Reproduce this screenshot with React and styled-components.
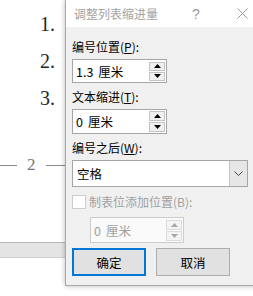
import React from "react";
import styled, { createGlobalStyle } from "styled-components";

const Global = createGlobalStyle`
  html, body { margin: 0; padding: 0; background: #fff; }
  body { width: 253px; height: 296px; overflow: hidden; }
`;

const Screen = styled.div`
  position: relative;
  width: 253px;
  height: 296px;
  overflow: hidden;
  background: #fff;
`;

const Doc = styled.div`
  display: flex;
  flex-direction: column;
  padding-top: 6px;
`;

const NumList = styled.div`
  width: 55px;
  display: flex;
  flex-direction: column;
  align-items: flex-end;
`;

const Num = styled.div`
  font-family: "Liberation Serif", "DejaVu Serif", serif;
  font-size: 20px;
  line-height: 37px;
  height: 37px;
  color: #262626;
`;

const PageMark = styled.div`
  margin-top: 38px;
  height: 20px;
  display: flex;
  align-items: center;
  gap: 10px;
`;

const Rule = styled.div`
  width: ${(p) => p.$w}px;
  height: 1px;
  background: #8a8a8a;
`;

const PageNum = styled.span`
  font-family: "Liberation Serif", "DejaVu Serif", serif;
  font-size: 17px;
  line-height: 20px;
  color: #777;
`;

const PageGap = styled.div`
  margin-top: 67px;
  height: 14px;
  background: #e4e4e4;
  border-top: 1px solid #b8b8b8;
  border-bottom: 1px solid #d0d0d0;
`;

const Dialog = styled.div`
  position: absolute;
  left: 65px;
  top: 0;
  width: 200px;
  height: 285px;
  background: #f0f0f0;
  border: 1px solid #a8a8a8;
  border-top: none;
  box-shadow: 0 0 5px rgba(0, 0, 0, 0.28);
  display: flex;
  flex-direction: column;
  font-family: "Noto Sans CJK SC", "Noto Sans", sans-serif;
  font-size: 12px;
  color: #000;
`;

const TitleBar = styled.div`
  height: 27px;
  background: #fff;
  display: flex;
  align-items: center;
  padding-left: 8px;
`;

const Title = styled.span`
  color: #a3a3a3;
  font-size: 12px;
  line-height: 16px;
  flex: 1;
`;

const Help = styled.span`
  width: 10px;
  color: #9a9a9a;
  font-family: "Liberation Sans", sans-serif;
  font-size: 14px;
  margin-right: 36px;
  text-align: center;
`;

const CloseIcon = styled.svg`
  width: 11px;
  height: 11px;
  margin-right: 18px;
`;

const Body = styled.div`
  display: flex;
  flex-direction: column;
  padding: 12px 0 0 6px;
`;

const Label = styled.div`
  height: 16px;
  line-height: 16px;
  color: ${(p) => (p.$disabled ? "#a0a0a0" : "#000")};
  margin-top: ${(p) => p.$mt || 0}px;
  white-space: nowrap;
`;

const Key = styled.span`
  text-decoration: underline;
  text-underline-offset: 1px;
`;

const SpinBox = styled.div`
  margin-top: ${(p) => p.$mt || 4}px;
  margin-left: ${(p) => p.$ml || 0}px;
  width: ${(p) => p.$w}px;
  height: ${(p) => p.$h}px;
  box-sizing: border-box;
  border: 1px solid ${(p) => (p.$disabled ? "#cccccc" : "#a6a6a6")};
  background: ${(p) => (p.$disabled ? "#fafafa" : "#fff")};
  display: flex;
  align-items: center;
  padding: 0 1px 0 3px;
`;

const Value = styled.span`
  flex: 1;
  display: flex;
  gap: 5px;
  font-size: 12.5px;
  color: ${(p) => (p.$disabled ? "#a0a0a0" : "#000")};
  white-space: nowrap;
`;

const Spinner = styled.div`
  display: flex;
  flex-direction: column;
  gap: 1px;
  width: 16px;
`;

const SpinBtn = styled.div`
  height: ${(p) => p.$h}px;
  box-sizing: border-box;
  border: 1px solid ${(p) => (p.$disabled ? "#dcdcdc" : "#c4c4c4")};
  background: ${(p) => (p.$disabled ? "#f4f4f4" : "#f0f0f0")};
  display: flex;
  align-items: center;
  justify-content: center;
`;

const Select = styled.div`
  margin-top: 4px;
  width: 176px;
  height: 27px;
  box-sizing: border-box;
  border: 1px solid #a6a6a6;
  background: #fff;
  display: flex;
  align-items: stretch;
`;

const SelectText = styled.span`
  flex: 1;
  padding-left: 4px;
  font-size: 12.5px;
  line-height: 25px;
`;

const DropBtn = styled.div`
  width: 17px;
  background: #e6e6e6;
  border-left: 1px solid #c4c4c4;
  display: flex;
  align-items: center;
  justify-content: center;
`;

const CheckRow = styled.div`
  margin-top: 7px;
  height: 16px;
  display: flex;
  align-items: center;
  gap: 3px;
`;

const Box = styled.div`
  width: 12px;
  height: 12px;
  border: 1px solid #cccccc;
  background: #fff;
`;

const Buttons = styled.div`
  margin-top: 5px;
  display: flex;
  gap: 10px;
`;

const Button = styled.div`
  width: 74px;
  height: 28px;
  box-sizing: border-box;
  background: #e1e1e1;
  border: ${(p) => (p.$primary ? "2px solid #0078d7" : "1px solid #adadad")};
  display: flex;
  align-items: center;
  justify-content: center;
  font-size: 12.5px;
`;

function Arrow({ up, color = "#000" }) {
  return (
    <svg width="7" height="4" viewBox="0 0 7 4">
      <polygon points={up ? "0,4 7,4 3.5,0" : "0,0 7,0 3.5,4"} fill={color} />
    </svg>
  );
}

function Spin({ num, unit, w, h, mt, ml, disabled }) {
  const c = disabled ? "#a8a8a8" : "#000";
  const bh = Math.floor((h - 5) / 2);
  return (
    <SpinBox $w={w} $h={h} $mt={mt} $ml={ml} $disabled={disabled}>
      <Value $disabled={disabled}>
        <span>{num}</span>
        <span>{unit}</span>
      </Value>
      <Spinner>
        <SpinBtn $h={bh} $disabled={disabled}>
          <Arrow up color={c} />
        </SpinBtn>
        <SpinBtn $h={bh} $disabled={disabled}>
          <Arrow color={c} />
        </SpinBtn>
      </Spinner>
    </SpinBox>
  );
}

export default function App() {
  return (
    <>
      <Global />
      <Screen>
        <Doc>
          <NumList>
            <Num>1.</Num>
            <Num>2.</Num>
            <Num>3.</Num>
          </NumList>
          <PageMark>
            <Rule $w={17} />
            <PageNum>2</PageNum>
            <Rule $w={30} />
          </PageMark>
          <PageGap />
        </Doc>
        <Dialog>
          <TitleBar>
            <Title>调整列表缩进量</Title>
            <Help>?</Help>
            <CloseIcon viewBox="0 0 11 11">
              <path d="M0.5 0.5 L10.5 10.5 M10.5 0.5 L0.5 10.5" stroke="#9a9a9a" strokeWidth="1" fill="none" />
            </CloseIcon>
          </TitleBar>
          <Body>
            <Label>
              编号位置(<Key>P</Key>):
            </Label>
            <Spin num="1.3" unit="厘米" w={95} h={24} />
            <Label $mt={6}>
              文本缩进(<Key>T</Key>):
            </Label>
            <Spin num="0" unit="厘米" w={95} h={25} />
            <Label $mt={6}>
              编号之后(<Key>W</Key>):
            </Label>
            <Select>
              <SelectText>空格</SelectText>
              <DropBtn>
                <svg width="9" height="5" viewBox="0 0 9 5">
                  <path d="M0.5 0.5 L4.5 4.5 L8.5 0.5" stroke="#444" strokeWidth="1" fill="none" />
                </svg>
              </DropBtn>
            </Select>
            <CheckRow>
              <Box />
              <Label $disabled>制表位添加位置(B):</Label>
            </CheckRow>
            <Spin num="0" unit="厘米" w={94} h={26} mt={7} ml={18} disabled />
            <Buttons>
              <Button $primary>确定</Button>
              <Button>取消</Button>
            </Buttons>
          </Body>
        </Dialog>
      </Screen>
    </>
  );
}
